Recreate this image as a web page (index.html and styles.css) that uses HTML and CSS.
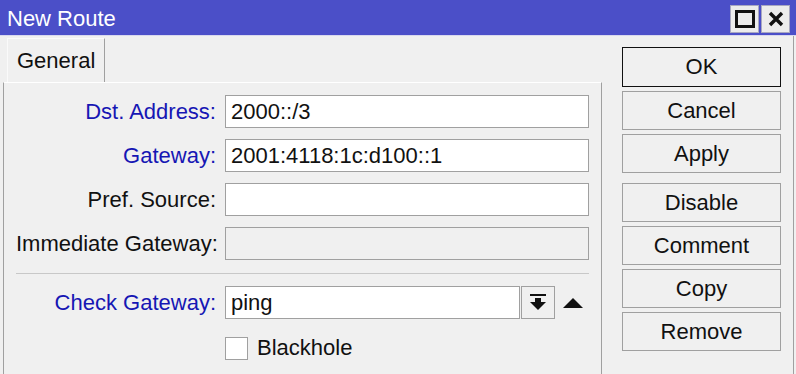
FILE: index.html
```html
<!DOCTYPE html>
<html lang="en">
<head>
    <meta charset="UTF-8">
    <title>New Route</title>
    <link rel="stylesheet" href="styles.css">
</head>
<body>

<div class="window">
    <div class="titlebar">
        <span class="title">New Route</span>
        <div class="title-btns">
            <button class="tb">
                <svg width="20" height="18" viewBox="0 0 20 18"><rect x="1.5" y="1.5" width="17" height="15" fill="none" stroke="#111" stroke-width="3"/></svg>
            </button>
            <button class="tb">
                <svg width="18" height="18" viewBox="0 0 18 18"><path d="M3 3 L15 15 M15 3 L3 15" stroke="#111" stroke-width="3.4"/></svg>
            </button>
        </div>
    </div>

    <div class="main">
        <div class="tabs-area">
            <div class="tabstrip">
                <div class="tab">General</div>
            </div>
            <div class="panel">
                <div class="form">
                    <label class="lbl link">Dst. Address:</label>
                    <div class="field">2000::/3</div>

                    <label class="lbl link">Gateway:</label>
                    <div class="field">2001:4118:1c:d100::1</div>

                    <label class="lbl">Pref. Source:</label>
                    <div class="field"></div>

                    <label class="lbl">Immediate Gateway:</label>
                    <div class="field disabled"></div>
                </div>

                <div class="separator"></div>

                <div class="form">
                    <label class="lbl link">Check Gateway:</label>
                    <div class="combo">
                        <div class="field">ping</div>
                        <button class="drop">
                            <svg width="16" height="17" viewBox="0 0 16 17"><rect x="0" y="0" width="16" height="2" fill="#111"/><rect x="5" y="4" width="6" height="5" fill="#111"/><path d="M0 8 H16 L8 16 Z" fill="#111"/></svg>
                        </button>
                        <svg class="up" width="20" height="10" viewBox="0 0 20 10"><path d="M0 10 L10 0 L20 10 Z" fill="#111"/></svg>
                    </div>

                    <span></span>
                    <div class="check">
                        <span class="box"></span>
                        <span>Blackhole</span>
                    </div>
                </div>
            </div>
        </div>

        <div class="actions">
            <button class="btn default">OK</button>
            <button class="btn">Cancel</button>
            <button class="btn">Apply</button>
            <button class="btn spaced">Disable</button>
            <button class="btn">Comment</button>
            <button class="btn">Copy</button>
            <button class="btn">Remove</button>
        </div>
    </div>
</div>

</body>
</html>
```

FILE: styles.css
```css
body {
    margin: 0;
    padding: 0;
    font-family: "Liberation Sans", Arial, sans-serif;
    font-size: 22px;
    color: #111;
    background-color: #f0f0f0;
}
.window {
    width: 796px;
    height: 374px;
    display: flex;
    flex-direction: column;
    overflow: hidden;
    background-color: #f0f0f0;
}
.titlebar {
    height: 35px;
    display: flex;
    align-items: center;
    padding-left: 7px;
    padding-right: 6px;
    background-color: #4b4fc8;
    border-bottom: 1px solid #d8d8ee;
    color: white;
}
.title {
    font-size: 22px;
    padding-top: 3px;
}
.title-btns {
    margin-left: auto;
    display: flex;
    gap: 2px;
    padding-top: 3px;
}
.tb {
    width: 29px;
    height: 28px;
    padding: 0;
    display: flex;
    align-items: center;
    justify-content: center;
    background-color: #ececec;
    border: 1px solid #a8a8c0;
}
.main {
    flex: 1;
    display: flex;
    padding-left: 3px;
    margin-right: 2px;
    border-right: 1px solid #a0a0a0;
}
.tabs-area {
    width: 599px;
    display: flex;
    flex-direction: column;
}
.tabstrip {
    height: 46px;
    display: flex;
    align-items: flex-end;
    padding-left: 4px;
}
.tab {
    width: 98px;
    height: 44px;
    box-sizing: border-box;
    padding-left: 9px;
    display: flex;
    align-items: center;
    border-left: 1px solid #fafafa;
    border-top: 1px solid #fafafa;
    border-right: 1px solid #a0a0a0;
}
.panel {
    flex: 1;
    padding: 12px 12px 0 12px;
    border-top: 1px solid #ffffff;
    border-left: 1px solid #a0a0a0;
    border-right: 1px solid #a0a0a0;
}
.form {
    display: grid;
    grid-template-columns: 200px 364px;
    column-gap: 9px;
    row-gap: 11px;
    align-items: center;
}
.lbl {
    text-align: right;
    white-space: nowrap;
}
.link {
    color: #1616b4;
}
.field {
    height: 33px;
    box-sizing: border-box;
    padding-left: 5px;
    display: flex;
    align-items: center;
    background-color: white;
    border: 1px solid #a0a0a0;
}
.field.disabled {
    background-color: #f0f0f0;
}
.separator {
    height: 1px;
    margin: 13px 0 12px 0;
    background-color: #c8c8c8;
}
.combo {
    display: flex;
    align-items: center;
}
.combo .field {
    width: 295px;
}
.drop {
    width: 34px;
    height: 33px;
    padding: 0;
    margin-left: 1px;
    display: flex;
    align-items: center;
    justify-content: center;
    background-color: #f0f0f0;
    border: 1px solid #a0a0a0;
}
.up {
    margin-left: 8px;
}
.check {
    display: flex;
    align-items: center;
    gap: 9px;
    margin-top: 5px;
}
.box {
    width: 23px;
    height: 23px;
    box-sizing: border-box;
    background-color: white;
    border: 1px solid #a0a0a0;
}
.actions {
    width: 159px;
    margin-left: 20px;
    padding-top: 11px;
    display: flex;
    flex-direction: column;
    gap: 4px;
}
.btn {
    height: 39px;
    padding: 0;
    font-family: "Liberation Sans", Arial, sans-serif;
    font-size: 22px;
    color: #111;
    background-color: #f0f0f0;
    border: 1px solid #a0a0a0;
}
.btn.default {
    height: 40px;
    border-color: #111;
}
.btn.spaced {
    margin-top: 6px;
}
```
